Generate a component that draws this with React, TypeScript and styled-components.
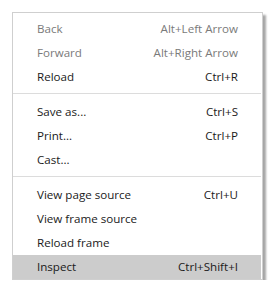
import React from "react";
import styled, { createGlobalStyle } from "styled-components";

const Global = createGlobalStyle`
  html, body { margin: 0; padding: 0; background: #ffffff; }
  body { font-family: "Segoe UI", "Open Sans", "Noto Sans", sans-serif; }
`;

const Page = styled.div`
  padding: 12px 0 0 12px;
`;

const Menu = styled.div`
  width: 249px;
  border: 1px solid #cfcfcf;
  background: #ffffff;
  padding: 4px 0 0 0;
  box-shadow: 3px 3px 2px rgba(0, 0, 0, 0.35);
  display: flex;
  flex-direction: column;
`;

const Row = styled.div<{ $disabled?: boolean; $active?: boolean }>`
  height: 24px;
  display: flex;
  align-items: center;
  justify-content: space-between;
  padding: 0 23px 1px 24px;
  margin-right: 1px;
  font-size: 11.6px;
  line-height: 1;
  box-sizing: border-box;
  color: ${(p) => (p.$disabled ? "#7a7a7a" : "#1a1a1a")};
  background: ${(p) => (p.$active ? "#cccccc" : "transparent")};
`;

const Label = styled.span``;
const Shortcut = styled.span``;

const Separator = styled.div`
  height: 1px;
  background: #dcdcdc;
  margin: 4px 1px 6px 0;
`;

type Item = { label: string; shortcut?: string; disabled?: boolean; active?: boolean } | "sep";

const items: Item[] = [
  { label: "Back", shortcut: "Alt+Left Arrow", disabled: true },
  { label: "Forward", shortcut: "Alt+Right Arrow", disabled: true },
  { label: "Reload", shortcut: "Ctrl+R" },
  "sep",
  { label: "Save as...", shortcut: "Ctrl+S" },
  { label: "Print...", shortcut: "Ctrl+P" },
  { label: "Cast..." },
  "sep",
  { label: "View page source", shortcut: "Ctrl+U" },
  { label: "View frame source" },
  { label: "Reload frame" },
  { label: "Inspect", shortcut: "Ctrl+Shift+I", active: true },
];

export default function App() {
  return (
    <>
      <Global />
      <Page>
        <Menu>
          {items.map((it, i) =>
            it === "sep" ? (
              <Separator key={i} />
            ) : (
              <Row key={i} $disabled={it.disabled} $active={it.active}>
                <Label>{it.label}</Label>
                {it.shortcut && <Shortcut>{it.shortcut}</Shortcut>}
              </Row>
            )
          )}
        </Menu>
      </Page>
    </>
  );
}
